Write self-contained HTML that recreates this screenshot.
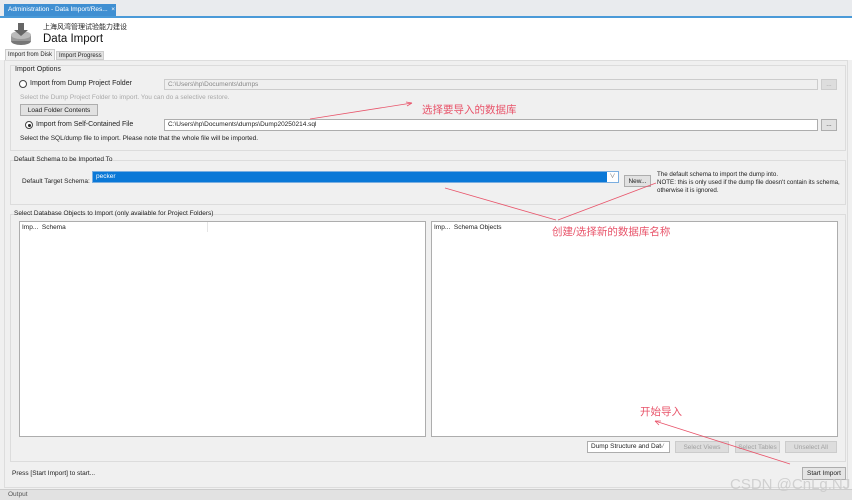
<!DOCTYPE html>
<html><head><meta charset="utf-8"><style>
*{box-sizing:border-box;margin:0;padding:0}
body{width:852px;height:500px;overflow:hidden;background:#f0f0f0;font-family:"Liberation Sans","Noto Sans CJK SC",sans-serif;font-size:7px;color:#222;position:relative}
.a{position:absolute;white-space:nowrap}
.box{position:absolute;border:1px solid #adadad;background:#fff;white-space:nowrap;overflow:hidden}
.btn{position:absolute;border:1px solid #adadad;background:#e1e1e1;text-align:center;font-size:6.5px;line-height:11px;white-space:nowrap}
.dis{color:#a0a0a0;border-color:#ccc;background:#ddd}
.grp{position:absolute;border:1px solid #dcdcdc}
.red{position:absolute;color:#e8546a;font-size:10.5px;white-space:nowrap}
</style></head><body>
<div class="a" style="left:0;top:0;width:852px;height:16px;background:#e9ebee"></div>
<div class="a" style="left:4px;top:4px;width:112px;height:12px;background:#3f8fd2;color:#fff;font-size:6.5px;line-height:12px;padding-left:4px">Administration - Data Import/Res... &nbsp;×</div>
<div class="a" style="left:0;top:16px;width:852px;height:2px;background:#4a9ad8"></div>
<div class="a" style="left:0;top:18px;width:852px;height:42px;background:#fff"></div>
<svg class="a" style="left:9px;top:21px" width="24" height="26"><ellipse cx="12" cy="20" rx="10" ry="4" fill="#777"/><rect x="2" y="14" width="20" height="6" fill="#999"/><ellipse cx="12" cy="14" rx="10" ry="4" fill="#bbb"/><path d="M9 2h6v7h4l-7 6-7-6h4z" fill="#666"/></svg>
<div class="a" style="left:43px;top:24px;font-size:7px;line-height:8px">上海风湾管理试验能力建设</div>
<div class="a" style="left:43px;top:33px;font-size:11.5px;line-height:13px;color:#111">Data Import</div>
<div class="a" style="left:5px;top:49px;width:50px;height:11px;background:#f0f0f0;border:1px solid #ccc;border-bottom:none;font-size:6px;line-height:10px;padding-left:2px;overflow:hidden">Import from Disk</div>
<div class="a" style="left:56px;top:51px;width:48px;height:9px;background:#e4e4e4;border:1px solid #ccc;font-size:6px;line-height:8px;padding-left:2px;overflow:hidden">Import Progress</div>
<div class="a" style="left:4px;top:60px;width:844px;height:428px;border:1px solid #ddd"></div>

<div class="grp" style="left:10px;top:65px;width:836px;height:86px"></div>
<div class="a" style="left:15px;top:66px">Import Options</div>
<div class="a" style="left:19px;top:80px;width:8px;height:8px;border:1px solid #444;border-radius:50%;background:#fff"></div>
<div class="a" style="left:30px;top:80px">Import from Dump Project Folder</div>
<div class="box" style="left:164px;top:79px;width:654px;height:11px;background:#efefef;border-color:#ccc;color:#888;font-size:6.5px;padding-left:3px;line-height:9px">C:\Users\hp\Documents\dumps</div>
<div class="btn dis" style="left:821px;top:79px;width:16px;height:11px;line-height:9px">...</div>
<div class="a" style="left:20px;top:94px;color:#a8a8a8;font-size:6.5px">Select the Dump Project Folder to import. You can do a selective restore.</div>
<div class="btn" style="left:20px;top:104px;width:78px;height:12px">Load Folder Contents</div>
<div class="a" style="left:25px;top:121px;width:8px;height:8px;border:1px solid #444;border-radius:50%;background:#fff"><div style="margin:1.5px;width:3px;height:3px;border-radius:50%;background:#222"></div></div>
<div class="a" style="left:36px;top:121px">Import from Self-Contained File</div>
<div class="box" style="left:164px;top:119px;width:654px;height:12px;font-size:6.5px;padding-left:3px;line-height:10px">C:\Users\hp\Documents\dumps\Dump20250214.sql</div>
<div class="btn" style="left:821px;top:119px;width:16px;height:12px;line-height:10px">...</div>
<div class="a" style="left:20px;top:135px;font-size:6.5px">Select the SQL/dump file to import. Please note that the whole file will be imported.</div>

<div class="grp" style="left:10px;top:160px;width:836px;height:45px"></div>
<div class="a" style="left:14px;top:156px;font-size:6.5px">Default Schema to be Imported To</div>
<div class="a" style="left:22px;top:178px;font-size:6.5px">Default Target Schema:</div>
<div class="a" style="left:92px;top:171px;width:527px;height:12px;background:#0a78d7;border:1px solid #7aaee0;color:#fff;font-size:6.5px;padding-left:3px;line-height:9px">pecker</div>
<div class="a" style="left:607px;top:172px;width:11px;height:10px;background:#fff;color:#666;font-size:6px;text-align:center;line-height:10px">∨</div>
<div class="btn" style="left:624px;top:175px;width:27px;height:12px">New...</div>
<div class="a" style="left:657px;top:171px;font-size:6.2px;line-height:8px">The default schema to import the dump into.<br>NOTE: this is only used if the dump file doesn't contain its schema,<br>otherwise it is ignored.</div>

<div class="grp" style="left:10px;top:214px;width:836px;height:248px"></div>
<div class="a" style="left:14px;top:210px;font-size:6.5px">Select Database Objects to Import (only available for Project Folders)</div>
<div class="box" style="left:19px;top:221px;width:407px;height:216px"></div>
<div class="a" style="left:22px;top:224px;font-size:6.5px">Imp... &nbsp;Schema</div>
<div class="a" style="left:207px;top:222px;width:1px;height:10px;background:#e5e5e5"></div>
<div class="box" style="left:431px;top:221px;width:407px;height:216px"></div>
<div class="a" style="left:434px;top:224px;font-size:6.5px">Imp... &nbsp;Schema Objects</div>
<div class="box" style="left:587px;top:441px;width:83px;height:12px;font-size:6.5px;padding-left:3px;line-height:10px">Dump Structure and Dat</div>
<div class="a" style="left:659px;top:442px;font-size:6px;color:#666;line-height:10px">∨</div>
<div class="btn dis" style="left:675px;top:441px;width:54px;height:12px">Select Views</div>
<div class="btn dis" style="left:735px;top:441px;width:45px;height:12px">Select Tables</div>
<div class="btn dis" style="left:785px;top:441px;width:52px;height:12px">Unselect All</div>
<div class="a" style="left:12px;top:470px;font-size:6.5px">Press [Start Import] to start...</div>
<div class="btn" style="left:802px;top:467px;width:44px;height:13px;background:#e5e5e5">Start Import</div>
<div class="a" style="left:0;top:489px;width:852px;height:11px;background:#e2e2e2;border-top:1px solid #ccc;font-size:6.5px;padding-left:8px;line-height:10px;color:#555">Output</div>
<div class="a" style="left:730px;top:476px;font-size:15px;color:rgba(200,200,200,.8)">CSDN @CnLg.NJ</div>

<svg class="a" style="left:0;top:0" width="852" height="500"><g stroke="#e8546a" fill="none" stroke-width="0.8">
<path d="M310 119 L412 103"/><path d="M412 103l-6-1M412 103l-5 3"/>
<path d="M445 188 L556 220"/><path d="M656 183 L558 220"/>
<path d="M790 464 L655 421"/><path d="M655 421l6 0M655 421l4 4"/></g></svg>
<div class="red" style="left:422px;top:102px">选择要导入的数据库</div>
<div class="red" style="left:552px;top:224px">创建/选择新的数据库名称</div>
<div class="red" style="left:640px;top:404px">开始导入</div>
</body></html>
